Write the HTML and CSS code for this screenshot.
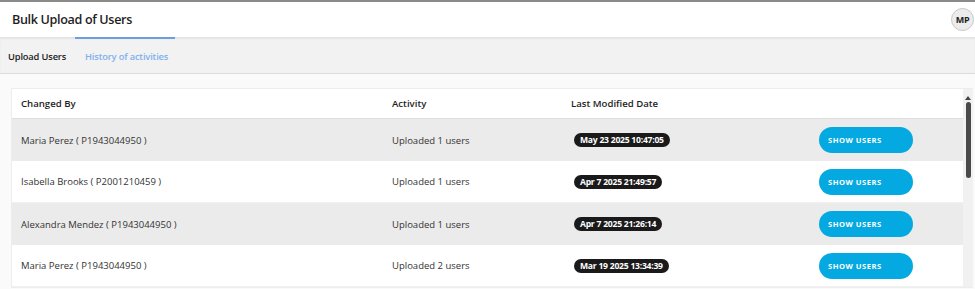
FILE: index.html
```html
<!DOCTYPE html>
<html>
<head>
<meta charset="utf-8">
<link rel="stylesheet" href="styles.css">
</head>
<body>
<header class="topbar">
  <h1 class="title">Bulk Upload of Users</h1>
  <div class="avatar">MP</div>
</header>
<nav class="tabs">
  <div class="tab">Upload Users</div>
  <div class="tab active">History of activities</div>
</nav>
<main class="content">
  <div class="panel">
    <div class="table">
      <div class="row head">
        <div class="cell">Changed By</div>
        <div class="cell">Activity</div>
        <div class="cell">Last Modified Date</div>
        <div class="cell"></div>
      </div>
      <div class="row odd">
        <div class="cell">Maria Perez ( P1943044950 )</div>
        <div class="cell">Uploaded 1 users</div>
        <div class="cell"><span class="badge">May 23 2025 10:47:05</span></div>
        <div class="cell"><button class="btn">SHOW USERS</button></div>
      </div>
      <div class="row">
        <div class="cell">Isabella Brooks ( P2001210459 )</div>
        <div class="cell">Uploaded 1 users</div>
        <div class="cell"><span class="badge">Apr 7 2025 21:49:57</span></div>
        <div class="cell"><button class="btn">SHOW USERS</button></div>
      </div>
      <div class="row odd">
        <div class="cell">Alexandra Mendez ( P1943044950 )</div>
        <div class="cell">Uploaded 1 users</div>
        <div class="cell"><span class="badge">Apr 7 2025 21:26:14</span></div>
        <div class="cell"><button class="btn">SHOW USERS</button></div>
      </div>
      <div class="row">
        <div class="cell">Maria Perez ( P1943044950 )</div>
        <div class="cell">Uploaded 2 users</div>
        <div class="cell"><span class="badge">Mar 19 2025 13:34:39</span></div>
        <div class="cell"><button class="btn">SHOW USERS</button></div>
      </div>
    </div>
    <div class="scrollbar">
      <div class="arrow"></div>
      <div class="thumb"></div>
    </div>
  </div>
</main>
</body>
</html>
```

FILE: styles.css
```css
* { box-sizing: border-box; }
html, body { margin: 0; padding: 0; }
body {
  font-family: "Open Sans", "Noto Sans", sans-serif;
  background: #fafafa;
  width: 975px;
  height: 289px;
  overflow: hidden;
}
.topbar {
  height: 37px;
  border-top: 2px solid #8a8a8a;
  background: #fff;
  display: flex;
  align-items: center;
  justify-content: space-between;
  padding: 0 1px 0 12px;
}
.title {
  margin: 0;
  font-size: 12.6px;
  font-weight: 600;
  color: #1e1e1e;
  letter-spacing: -0.35px;
}
.avatar {
  width: 23px;
  height: 23px;
  border-radius: 50%;
  background: #ececec;
  border: 1px solid #c8c8c8;
  font-size: 9px;
  font-weight: 700;
  color: #222;
  display: flex;
  align-items: center;
  justify-content: center;
  letter-spacing: -0.3px;
  margin-top: -1px;
}
.tabs {
  height: 37px;
  background: #f2f2f2;
  border-bottom: 1px solid #dcdcdc;
  box-shadow: inset 0 2px 2px rgba(0,0,0,0.06);
  display: flex;
}
.tab {
  font-size: 9.3px;
  font-weight: 600;
  color: #222;
  display: flex;
  align-items: center;
  padding-left: 8px;
  width: 75px;
  border-top: 2px solid transparent;
  letter-spacing: -0.15px;
  white-space: nowrap;
}
.tab.active {
  width: 100px;
  padding-left: 10px;
  color: #7fb0ef;
  border-top-color: #6a9fe0;
}
.content {
  padding: 14px 2px 0 11px;
  background: #fafafa;
}
.panel {
  display: flex;
  border: 1px solid #ededed;
  border-right: none;
  background: #fff;
}
.table { flex: 1; }
.row {
  display: grid;
  grid-template-columns: 371px 179px 248px 1fr;
  padding-left: 9px;
  height: 42px;
  align-items: center;
  font-size: 9.5px;
  color: #333;
  background: #fff;
}
.row.odd { background: #ebebeb; }
.row.head {
  height: 30px;
  font-size: 9.6px;
  font-weight: 600;
  color: #1e1e1e;
  border-bottom: 1px solid #dedede;
}
.row + .row:not(.odd) { border-bottom: 1px solid #f1f1f1; }
.cell { white-space: nowrap; }
.badge {
  display: inline-block;
  background: #1a1a1a;
  color: #fff;
  font-size: 8.6px;
  font-weight: 700;
  line-height: 14px;
  padding: 0 6px;
  border-radius: 7px;
  margin-left: 3px;
  letter-spacing: -0.25px;
}
.btn {
  width: 94px;
  height: 26px;
  border: none;
  border-radius: 13px;
  background: #03a9e0;
  color: #fff;
  font-family: inherit;
  font-size: 7.6px;
  font-weight: 700;
  letter-spacing: 0.5px;
  text-align: left;
  padding-left: 9px;
  margin-left: 0;
}
.scrollbar {
  width: 10px;
  background: #f1f1f1;
  display: flex;
  flex-direction: column;
  align-items: center;
}
.arrow {
  margin-top: 7px;
  width: 0;
  height: 0;
  border-left: 3px solid transparent;
  border-right: 3px solid transparent;
  border-bottom: 4px solid #444;
}
.thumb {
  margin-top: 2px;
  width: 5px;
  height: 76px;
  border-radius: 3px;
  background: #4a4a4a;
}
```
